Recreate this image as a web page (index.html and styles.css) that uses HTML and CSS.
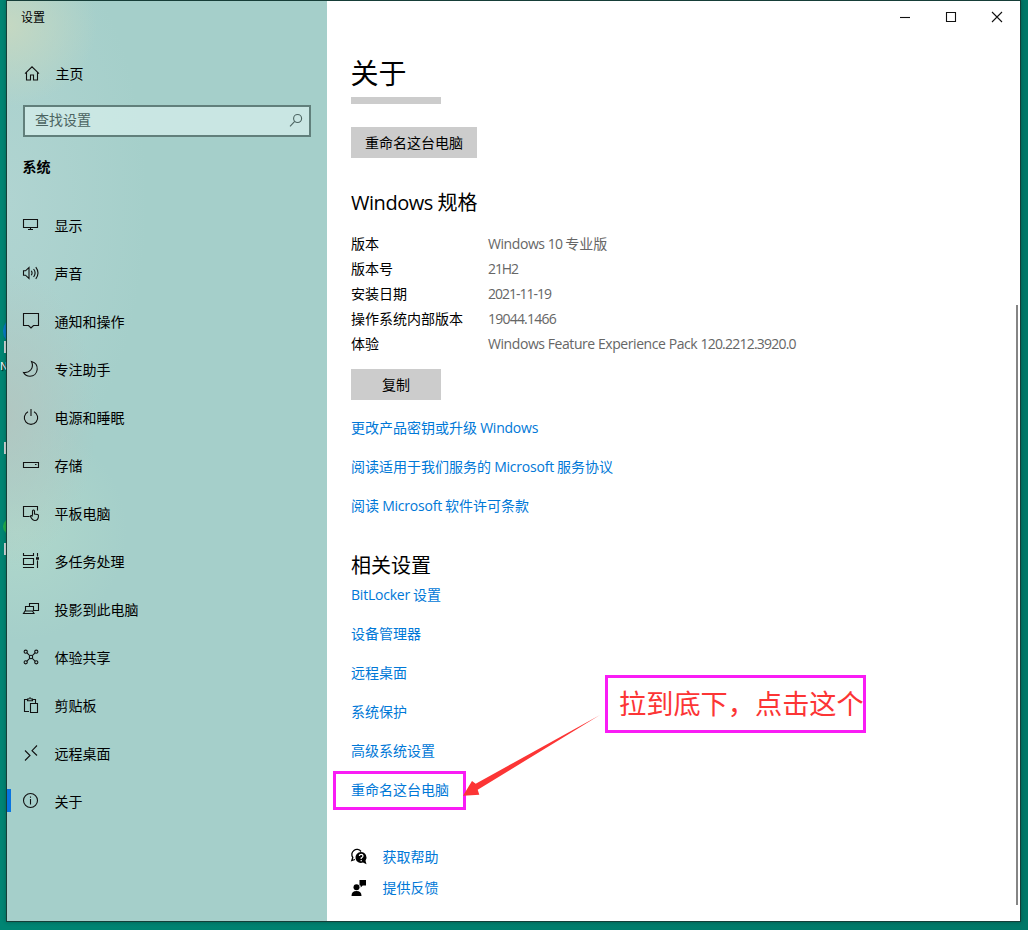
FILE: index.html
```html
<!DOCTYPE html>
<html lang="zh-CN">
<head>
<meta charset="utf-8">
<title>设置</title>
<link rel="stylesheet" href="styles.css">
</head>
<body>
<div class="desk-blue"></div>
<div class="desk-tile tile-a"></div>
<div class="desk-label">N</div>
<div class="desk-tile tile-b"></div>
<div class="desk-green"></div>
<div class="desk-tile tile-c"></div>
<div class="window">
  <aside class="sidebar">
    <div class="app-title">设置</div>
    <a class="home">
      <svg class="icon" viewBox="0 0 18 18"><path d="M2 9.700 9 2.800l7 6.900M3.500 8.500V16h4v-5h3v5h4V8.500"/></svg>
      <span>主页</span>
    </a>
    <div class="search">
      <span>查找设置</span>
      <svg class="search-icon" viewBox="0 0 14 14"><circle cx="8.600" cy="5.500" r="4"/><path d="M5.700 8.400 1 13.300"/></svg>
    </div>
    <div class="group">系统</div>
    <nav class="nav">
      <a class="item"><svg class="icon" viewBox="0 0 18 18"><path d="M1.500 3.500h14v8h-14zM8.500 11.500v2M6 13.500h5"/></svg><span>显示</span></a>
      <a class="item"><svg class="icon" viewBox="0 0 18 18"><path d="M1.500 6.800h2L7 3.500v11l-3.500-3.300h-2zM9.300 6.800q1.500 2.200 0 4.400M11.600 5q3 4 0 8M13.800 3.200q4.400 5.800 0 11.600"/></svg><span>声音</span></a>
      <a class="item"><svg class="icon" viewBox="0 0 18 18"><path d="M1.500 1.500h15v12h-5l-2.500 2.500-2.500-2.500h-5z"/></svg><span>通知和操作</span></a>
      <a class="item"><svg class="icon" viewBox="0 0 18 18"><path d="M9.500 1.500c4 1 6 4.200 5.700 8-.4 4-3.400 6.700-7.200 6.700-3 0-5.300-1.400-6.500-3.700 6 .8 11-4.500 8-11z"/></svg><span>专注助手</span></a>
      <a class="item"><svg class="icon" viewBox="0 0 18 18"><path d="M6 3.700a6.700 6.700 0 1 0 6 0M9 1v7"/></svg><span>电源和睡眠</span></a>
      <a class="item"><svg class="icon" viewBox="0 0 18 18"><path d="M1.500 6.500h15v5h-15zM13 8.500h1.500"/></svg><span>存储</span></a>
      <a class="item"><svg class="icon" viewBox="0 0 18 18"><path d="M7.500 12.500h-6v-10h14v4M10.500 11.500V6.700q1-1.400 2 0v3.300l3 .5q1 .2 1 1.300-.1 4.700-3.500 4.700-2.500 0-4.700-4.300 1-1.300 2.200.3"/></svg><span>平板电脑</span></a>
      <a class="item"><svg class="icon" viewBox="0 0 18 18"><path d="M1.500 1v2.500h10V1M1.500 6.500h10v6h-10zM1.500 16v-.5h10v.5M15.500 1v3.500M15.500 8.500V16"/><path class="fill" d="M14 5.200h3v2.500h-3z"/></svg><span>多任务处理</span></a>
      <a class="item"><svg class="icon" viewBox="0 0 18 18"><path d="M7.500 6.500v-3h9v7h-5M3.500 11v-4.500h8v4.500M1.500 13.500h10.500l-1.500-2.500H3z"/></svg><span>投影到此电脑</span></a>
      <a class="item"><svg class="icon" viewBox="0 0 18 18"><path d="m4.700 4.700 3 3m2.600 2.600 3 3M13.300 4.700l-3 3m-2.600 2.600-3 3"/><circle cx="3.700" cy="3.700" r="1.600"/><circle cx="14.300" cy="3.700" r="1.600"/><circle cx="3.700" cy="14.300" r="1.600"/><circle cx="14.300" cy="14.300" r="1.600"/><circle cx="9" cy="9" r="1.700"/></svg><span>体验共享</span></a>
      <a class="item"><svg class="icon" viewBox="0 0 18 18"><path d="M7 15.500H2.500v-12h3m5 0h3V7M5.500 4.800V3h1.300q1.200-2.500 2.400 0h1.300v1.800zM8.500 7.500h7v9h-7z"/></svg><span>剪贴板</span></a>
      <a class="item"><svg class="icon" viewBox="0 0 18 18"><path d="m3 6.500 5 5-5 5M15 1.500 10 6.700l5 4.800"/></svg><span>远程桌面</span></a>
      <a class="item selected"><svg class="icon" viewBox="0 0 18 18"><circle cx="8.500" cy="8.500" r="7"/><path d="M8.500 7v5.500M8.500 4.500v1.300"/></svg><span>关于</span></a>
    </nav>
  </aside>
  <main class="content">
    <div class="caption">
      <svg viewBox="0 0 12 12"><path d="M1 6.500h10"/></svg>
      <svg viewBox="0 0 12 12"><path d="M1.500 1.500h9v9h-9z"/></svg>
      <svg viewBox="0 0 12 12"><path d="m1 1 10 10M11 1 1 11"/></svg>
    </div>
    <h1>关于</h1>
    <div class="clipped-button"></div>
    <button class="btn rename">重命名这台电脑</button>
    <h2 class="spec-title"><span class="latin-lg">Windows</span> 规格</h2>
    <dl class="specs">
      <dt>版本</dt><dd><span class="latin">Windows <span class="num">10</span></span> 专业版</dd>
      <dt>版本号</dt><dd><span class="latin num build">21H2</span></dd>
      <dt>安装日期</dt><dd><span class="latin num date">2021-11-19</span></dd>
      <dt>操作系统内部版本</dt><dd><span class="latin num">19044.1466</span></dd>
      <dt>体验</dt><dd><span class="latin">Windows Feature Experience Pack <span class="num">120.2212.3920.0</span></span></dd>
    </dl>
    <button class="btn copy">复制</button>
    <div class="links">
      <a>更改产品密钥或升级 <span class="latin">Windows</span></a>
      <a>阅读适用于我们服务的 <span class="latin">Microsoft</span> 服务协议</a>
      <a>阅读 <span class="latin">Microsoft</span> 软件许可条款</a>
    </div>
    <h2 class="related-title">相关设置</h2>
    <div class="links related">
      <a><span class="latin">BitLocker</span> 设置</a>
      <a>设备管理器</a>
      <a>远程桌面</a>
      <a>系统保护</a>
      <a>高级系统设置</a>
      <a>重命名这台电脑</a>
    </div>
    <div class="support">
      <a><svg viewBox="0 0 18 18"><path class="line" d="M11 3.500A5 5 0 0 0 2.800 9.500L1.800 12.500l3.200-1"/><path d="M11 4a5.500 5.500 0 1 0 2 10.600l3.500 1.600-1-3.500A5.500 5.500 0 0 0 11 4z"/><path class="mark" d="M9.300 8q.2-1.700 1.900-1.700T13 7.900q0 1-1.800 2v1M11.200 12v1.200"/></svg><span>获取帮助</span></a>
      <a><svg viewBox="0 0 18 18"><circle cx="6.500" cy="8.200" r="3"/><path d="M1.500 17q0-5 5-5t5 5zM9.500 1H16v5.500h-3.300l-2 2V6.500H9.500z"/></svg><span>提供反馈</span></a>
    </div>
  </main>
  <div class="scrollbar"></div>
</div>
<div class="mark-box target"></div>
<svg class="arrow" viewBox="0 0 140 90"><path d="M139 0 14.700 68.700 11 66 2 80.700 18.300 79.700 16.700 74.700z"/></svg>
<div class="mark-box note">拉到底下，点击这个</div>
</body>
</html>
```
FILE: styles.css
```css
* { box-sizing: border-box; }
body {
  margin: 0;
  width: 1028px;
  height: 930px;
  padding: 1px 8px 9px 7px;
  overflow: hidden;
  position: relative;
  background: linear-gradient(90deg, #008573, #007868);
  color: #000;
  font: 14px/20px "Noto Sans CJK SC", sans-serif;
}
.window {
  position: relative;
  display: flex;
  height: 920px;
  background: #fff;
  box-shadow: 0 0 0 1px #163e38, 0 0 4px 1px rgba(0, 30, 25, .35);
}
.sidebar {
  width: 320px;
  background:
    radial-gradient(ellipse 90px 80px at 0 25px, #c5d8c2, transparent),
    radial-gradient(ellipse 90px 150px at 0 415px, rgba(178, 198, 192, .9), transparent),
    radial-gradient(ellipse 110px 110px at 10px 530px, rgba(176, 216, 203, .9), transparent),
    radial-gradient(ellipse 140px 280px at 0 200px, #b0d4d1, transparent),
    #a5cfca;
}
.app-title { padding: 6px 0 0 14px; font-size: 12px; line-height: 20px; height: 48px; }
.icon { width: 18px; height: 18px; flex: none; }
.icon, .search-icon, .caption svg { fill: none; stroke: #111; stroke-width: 1.1; }
.icon .fill { fill: #111; stroke: none; }
.home { display: flex; align-items: center; height: 48px; padding-left: 16px; gap: 14.5px; }
.home span { padding-bottom: 1px; }
.search {
  display: flex;
  align-items: center;
  justify-content: space-between;
  width: 288px;
  height: 32px;
  margin: 8px 0 0 16px;
  padding: 0 6px 4px 10px;
  border: 2px solid #617f7b;
  background: rgba(220, 243, 239, .65);
  color: #4b6461;
}
.search-icon { width: 14px; height: 14px; margin-top: 2px; stroke: #4b6461; }
.group { margin: 19px 0 25px 15.5px; font-weight: 700; line-height: 20px; }
.item { display: flex; align-items: center; height: 48px; padding-left: 15px; gap: 14.5px; }
.selected { background: linear-gradient(#0874e0, #0874e0) 0 12px / 4px 23px no-repeat; }

.content { flex: 1; padding-left: 24px; }
.caption { display: flex; justify-content: flex-end; gap: 34px; height: 50px; padding: 10px 17px 0 0; }
.caption svg { width: 12px; height: 12px; }
h1, h2, dl, dd { margin: 0; font-weight: 400; }
h1 { font-size: 28px; line-height: 42px; height: 46px; text-indent: -.5px; }
h2 { font-size: 20px; line-height: 32px; height: 30px; }
.clipped-button { width: 90px; height: 7px; background: #ccc; }
.btn {
  display: block;
  height: 31px;
  padding: 0 0 2px;
  border: 0;
  background: #ccc;
  color: #000;
  font: inherit;
}
.rename { width: 126px; margin-top: 23px; }
.copy { width: 90px; margin-top: 13px; padding-bottom: 1px; }
.spec-title { margin-top: 28px; }
.specs { display: grid; grid-template-columns: 137px 1fr; grid-auto-rows: 25px; line-height: 25px; margin-top: 15px; }
dd { color: #666; }
.latin, .latin-lg { font-family: "Open Sans", sans-serif; line-height: 1; }
.latin { font-size: 14px; letter-spacing: -.43px; }
.num { letter-spacing: -.78px; }
.build { letter-spacing: -1.1px; }
.date { letter-spacing: -1px; }
.latin-lg { font-size: 20px; letter-spacing: -.45px; }
.links { display: flex; flex-direction: column; gap: 19px; margin-top: 17px; color: #0078d7; }
.links a { height: 20px; }
.links a, dt, dd { white-space: nowrap; }
.links .latin { letter-spacing: -.22px; }
.related-title { margin-top: 34px; }
.related { margin-top: 5px; }
.support { display: flex; flex-direction: column; gap: 11px; margin-top: 47px; color: #0078d7; }
.support a { display: flex; align-items: center; height: 20px; gap: 14.5px; }
.support svg { width: 18px; height: 18px; margin: 2px 0 0 -1px; fill: #000; }
.support .line { fill: none; stroke: #000; stroke-width: 1.3; }
.support .mark { fill: none; stroke: #fff; stroke-width: 1.2; }
.scrollbar { position: absolute; right: 2px; top: 304px; width: 2px; height: 600px; background: #858585; }

.mark-box { position: absolute; border: 3px solid #f91cf5; }
.target { left: 333px; top: 771px; width: 133px; height: 39px; }
.note {
  left: 605px;
  top: 675px;
  width: 261px;
  height: 58px;
  padding-left: 11px;
  color: #fc3535;
  font-size: 27.2px;
  line-height: 49px;
  white-space: nowrap;
}
.arrow { position: absolute; left: 461px; top: 715px; width: 140px; height: 90px; fill: #fc3535; }

.desk-blue { position: absolute; left: 3px; top: 319px; width: 20px; height: 24px; border-radius: 50%; background: #0879c8; }
.desk-green { position: absolute; left: 3px; top: 518px; width: 18px; height: 17px; border-radius: 50%; background: #22b04b; }
.desk-tile { position: absolute; left: 4px; width: 8px; height: 12px; background: #d5dcdd; }
.tile-a { top: 341px; }
.tile-b { top: 442px; }
.tile-c { top: 543px; }
.desk-label { position: absolute; left: 0; top: 357px; color: #fff; font-size: 11px; line-height: 17px; text-shadow: 1px 1px 1px #000; }
```
